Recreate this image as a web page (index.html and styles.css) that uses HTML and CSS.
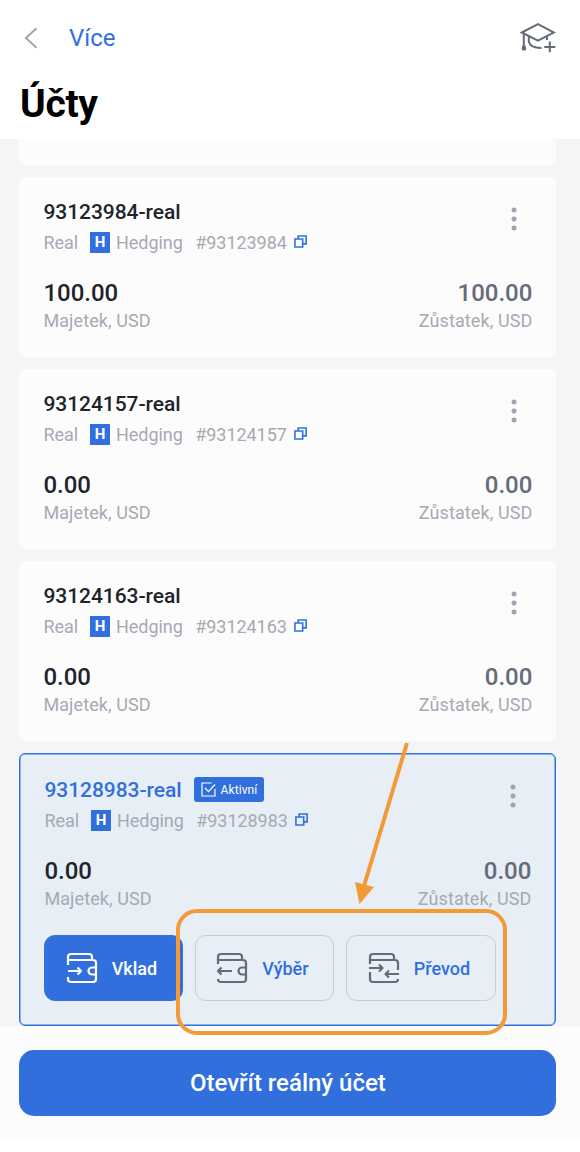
FILE: index.html
```
<!DOCTYPE html>
<html lang="cs">
<head>
  <meta charset="utf-8">
  <meta name="viewport" content="width=device-width, user-scalable=no">
  <title>Účty</title>
  <link rel="stylesheet" href="styles.css">
</head>
<body>
  <svg class="symbols" width="0" height="0">
    <symbol id="copy" viewBox="0 0 13 13">
      <path d="M4.2 3.2V1h7.9v7.9H9.5M.9 4h7.8v8H.9z" fill="none" stroke="currentColor" stroke-width="1.6"/>
    </symbol>
    <symbol id="dots" viewBox="0 0 6 24">
      <circle cx="3" cy="3" r="2.5"/><circle cx="3" cy="12" r="2.5"/><circle cx="3" cy="21" r="2.5"/>
    </symbol>
  </svg>

  <header class="header">
    <div class="nav">
      <svg class="back" width="14" height="22" viewBox="0 0 14 22"><path d="M12.5 1.2 2 11l10.5 9.8"/></svg>
      <a class="nav-link" href="#">Více</a>
      <svg class="education" width="36" height="30" viewBox="0 0 36 30">
        <path d="M1.8 9.5 18 1.2l16 8.3-16 8.2zM3.8 11v12M8.8 14v4.5c1 4.800 5.500 6.500 12.700 6.400M27 13.500v3.500M29.800 18.500v10.800M24.300 23.900h11"/>
        <path class="tassel" d="M2.300 22.500h3.200l.8 3.700-1 1.200H2.600l-1-1.200z"/>
      </svg>
    </div>
    <h1>Účty</h1>
  </header>

  <main class="accounts">
    <section class="card card-cut"></section>

    <section class="card">
      <div class="card-head">
        <div>
          <div class="name">93123984-real</div>
          <div class="info"><span>Real</span><b class="hedge">H</b><span>Hedging</span><span class="number">#93123984</span><svg class="copy"><use href="#copy"/></svg></div>
        </div>
        <svg class="dots"><use href="#dots"/></svg>
      </div>
      <div class="sums">
        <div><div class="sum">100.00</div><div class="label">Majetek, USD</div></div>
        <div class="balance"><div class="sum">100.00</div><div class="label">Zůstatek, USD</div></div>
      </div>
    </section>

    <section class="card">
      <div class="card-head">
        <div>
          <div class="name">93124157-real</div>
          <div class="info"><span>Real</span><b class="hedge">H</b><span>Hedging</span><span class="number">#93124157</span><svg class="copy"><use href="#copy"/></svg></div>
        </div>
        <svg class="dots"><use href="#dots"/></svg>
      </div>
      <div class="sums">
        <div><div class="sum">0.00</div><div class="label">Majetek, USD</div></div>
        <div class="balance"><div class="sum">0.00</div><div class="label">Zůstatek, USD</div></div>
      </div>
    </section>

    <section class="card">
      <div class="card-head">
        <div>
          <div class="name">93124163-real</div>
          <div class="info"><span>Real</span><b class="hedge">H</b><span>Hedging</span><span class="number">#93124163</span><svg class="copy"><use href="#copy"/></svg></div>
        </div>
        <svg class="dots"><use href="#dots"/></svg>
      </div>
      <div class="sums">
        <div><div class="sum">0.00</div><div class="label">Majetek, USD</div></div>
        <div class="balance"><div class="sum">0.00</div><div class="label">Zůstatek, USD</div></div>
      </div>
    </section>

    <section class="card card-active">
      <div class="card-head">
        <div>
          <div class="name">93128983-real
            <span class="badge">
              <svg width="15" height="15" viewBox="0 0 15 15"><path d="M10.5 1H1v13h13V7M4 6l3.5 3.7L14 2.5"/></svg>
              Aktivní
            </span>
          </div>
          <div class="info"><span>Real</span><b class="hedge">H</b><span>Hedging</span><span class="number">#93128983</span><svg class="copy"><use href="#copy"/></svg></div>
        </div>
        <svg class="dots"><use href="#dots"/></svg>
      </div>
      <div class="sums">
        <div><div class="sum">0.00</div><div class="label">Majetek, USD</div></div>
        <div class="balance"><div class="sum">0.00</div><div class="label">Zůstatek, USD</div></div>
      </div>
      <div class="actions">
        <button class="action action-main">
          <svg width="32" height="32" viewBox="0 0 32 32">
            <path d="M2 13V5q0-3 3-3h18q3 0 3 3v3M2 8h25q3 0 3 3v16q0 3-3 3H5q-3 0-3-3v-2M2 19h13M11.5 15.5 15 19l-3.5 3.5M30 15.5h-4a3.5 3.5 0 0 0 0 7h4"/>
          </svg>
          Vklad
        </button>
        <button class="action">
          <svg width="32" height="32" viewBox="0 0 32 32">
            <path d="M2 12V5q0-3 3-3h18q3 0 3 3v3M2 8h25q3 0 3 3v16q0 3-3 3H5q-3 0-3-3M2 19h14M5.5 15.5 2 19l3.5 3.5M30 15.5h-4a3.5 3.5 0 0 0 0 7h4"/>
          </svg>
          Výběr
        </button>
        <button class="action action-wide">
          <svg width="32" height="32" viewBox="0 0 32 32">
            <path d="M2 12V5q0-3 3-3h18q3 0 3 3v3M2 8h25q3 0 3 3v7M1 16h13.5M11 12.5l3.5 3.5-3.5 3.5M2 20v7q0 3 3 3h22q3 0 3-3M31 22H17.5M21 18.5 17.5 22l3.5 3.5"/>
          </svg>
          Převod
        </button>
      </div>
    </section>
  </main>

  <footer class="footer">
    <button class="open">Otevřít reálný účet</button>
  </footer>

  <!-- highlight over the withdraw and transfer buttons -->
  <div class="highlight"></div>
  <svg class="arrow" width="60" height="170" viewBox="0 0 60 170">
    <path class="arrow-line" d="M57 3 14 146"/>
    <path class="arrow-tip" d="M5 142l19 5-14.5 17z"/>
  </svg>
</body>
</html>
```

FILE: styles.css
```
* {
    box-sizing: border-box;
}
body {
    position: relative;
    margin: 0;
    height: 1152px;
    overflow: hidden;
    background: #fff;
    color: #1f242c;
    font-family: Roboto, "Noto Sans", sans-serif;
}
svg {
    flex: none;
}
.symbols {
    position: absolute;
}
.header {
    height: 139px;
    padding: 18px 24px 0 20px;
}
.nav {
    display: flex;
    align-items: center;
    height: 40px;
}
.back {
    margin: 0 31px 0 4px;
    fill: none;
    stroke: #a0a5b0;
    stroke-width: 2;
}
.nav-link {
    color: #3170dc;
    font-size: 24px;
    text-decoration: none;
}
.education {
    margin-left: auto;
    fill: none;
    stroke: #646b79;
    stroke-width: 2;
}
.education .tassel {
    fill: #646b79;
    stroke: none;
}
h1 {
    margin: 22px 0 0;
    font-size: 39px;
    line-height: 48px;
    font-weight: 700;
    letter-spacing: -.3px;
    color: #000;
}
.accounts {
    display: flex;
    flex-direction: column;
    gap: 12px;
    height: 887px;
    padding: 0 23.6px 0 19.4px;
    background: #f4f5f7;
}
.card {
    flex: none;
    height: 180px;
    padding: 24px;
    border-radius: 6px;
    background: #fcfcfc;
}
.card-cut {
    height: 26px;
    padding: 0;
    border-radius: 0 0 6px 6px;
}
.card-active {
    height: 273px;
    border: 1px solid #3170dc;
    background: #e8eef6;
    box-shadow: inset 0 0 0 .5px #3170dc;
}
.card-head {
    display: flex;
    justify-content: space-between;
}
.name {
    display: flex;
    align-items: center;
    height: 22px;
    font-size: 21px;
    font-weight: 500;
    letter-spacing: -.05px;
    white-space: nowrap;
}
.card-active .name {
    height: 23px;
    color: #3170dc;
}
.badge {
    display: flex;
    align-items: center;
    gap: 5px;
    height: 25px;
    margin-left: 12.5px;
    padding: 0 7px 0 6.5px;
    border-radius: 3px;
    background: #3170dc;
    color: #fff;
    font-size: 12px;
    font-weight: 400;
    letter-spacing: .1px;
}
.badge svg {
    fill: none;
    stroke: currentColor;
    stroke-width: 1.2;
}
.info {
    display: flex;
    align-items: center;
    height: 21px;
    margin-top: 9px;
    color: #a5aab4;
    font-size: 18px;
    letter-spacing: -.05px;
}
.hedge {
    width: 20px;
    height: 21px;
    margin: 0 6px 0 12px;
    background: #3170dc;
    color: #fff;
    font-size: 15px;
    line-height: 21px;
    text-align: center;
}
.number {
    margin: 0 7.5px 0 12.5px;
}
.copy {
    width: 13px;
    height: 13px;
    margin-bottom: 3px;
    color: #3170dc;
}
.dots {
    width: 6px;
    height: 24px;
    margin: 6px 15px 0 0;
    fill: #a0a5b0;
}
.sums {
    display: flex;
    justify-content: space-between;
    margin-top: 26px;
}
.sum {
    font-size: 24px;
    line-height: 28px;
    font-weight: 500;
}
.label {
    margin-top: 2px;
    color: #a5aab4;
    font-size: 18px;
    line-height: 24px;
    letter-spacing: .1px;
}
.balance {
    text-align: right;
}
.balance .sum {
    color: #646b79;
}
.actions {
    display: flex;
    gap: 12px;
    margin-top: 24px;
}
button {
    margin: 0;
    border: 0;
    font-family: inherit;
    font-weight: 500;
}
.action {
    display: flex;
    align-items: center;
    justify-content: center;
    gap: 14px;
    width: 139px;
    height: 66px;
    padding: 0 5px 0 0;
    border: 1px solid #c8ccd5;
    border-radius: 11px;
    background: none;
    color: #3170dc;
    font-size: 18px;
}
.action svg {
    fill: none;
    stroke: #646b79;
    stroke-width: 2.2;
    stroke-linejoin: round;
}
.action-main {
    border-color: #3170dc;
    background: #3170dc;
    color: #fff;
}
.action-main svg {
    stroke: #fff;
}
.action-wide {
    width: 150px;
}
.footer {
    height: 114px;
    padding: 24px 23.6px 0 19.4px;
    background: #fcfcfc;
}
.open {
    width: 100%;
    height: 66px;
    border-radius: 15px;
    background: #3170dc;
    color: #fff;
    font-size: 24px;
}
.highlight {
    position: absolute;
    left: 176px;
    top: 909px;
    width: 331px;
    height: 126px;
    border: 4px solid #f29a38;
    border-radius: 21px;
}
.arrow {
    position: absolute;
    left: 350px;
    top: 740px;
}
.arrow-line {
    fill: none;
    stroke: #f29a38;
    stroke-width: 4;
}
.arrow-tip {
    fill: #f29a38;
}
```
